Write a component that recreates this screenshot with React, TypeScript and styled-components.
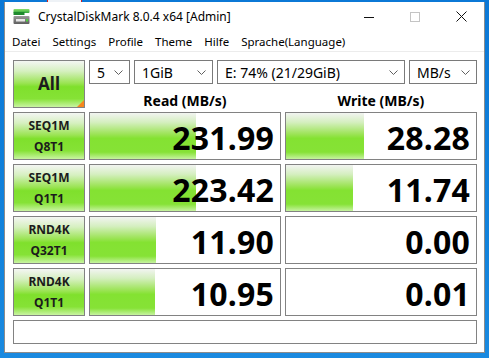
import { Fragment } from 'react';
import styled, { createGlobalStyle } from 'styled-components';

const GlobalStyle = createGlobalStyle`
  html, body {
    margin: 0;
    padding: 0;
  }
  body {
    width: 489px;
    height: 358px;
    overflow: hidden;
    background: linear-gradient(180deg, #0b78d6 0%, #1283dc 70%, #1a8ae0 100%);
    font-family: 'Segoe UI', 'Noto Sans', 'Open Sans', sans-serif;
  }
`;

const Desktop = styled.div`
  display: flex;
  flex-direction: column;
`;

const TopStrip = styled.div`
  height: 2px;
  display: flex;
  padding-left: 47px;
`;

const TaskMarker = styled.div`
  width: 33px;
  height: 2px;
  background: #eef2f6;
  border-left: 1px solid #d42020;
  border-right: 1px solid #d42020;
`;

const Window = styled.div`
  box-sizing: border-box;
  margin-left: 4px;
  width: 481px;
  height: 351px;
  background: #fff;
  border: 1px solid #8c8c8c;
  border-top: none;
  display: flex;
  flex-direction: column;
`;

const TitleBar = styled.div`
  height: 29px;
  display: flex;
  align-items: center;
  padding-left: 8px;
`;

const TitleText = styled.span`
  margin-left: 8px;
  font-size: 12px;
  color: #000;
  flex: 1;
  white-space: nowrap;
`;

const Controls = styled.div`
  display: flex;
  height: 29px;
`;

const ControlButton = styled.div`
  width: 46px;
  display: flex;
  align-items: center;
  justify-content: center;
`;

const MenuBar = styled.div`
  height: 20px;
  display: flex;
  align-items: center;
  gap: 12px;
  padding-left: 7px;
  border-bottom: 1px solid #ececec;
  font-size: 11.5px;
  color: #000;
`;

const MenuItem = styled.span`
  white-space: nowrap;
`;

const Content = styled.div`
  padding: 8px 8px 0 8px;
  display: grid;
  grid-template-columns: 72px 192px 192px;
  grid-template-rows: 24px 24px 52px 52px 52px 52px 28px;
  column-gap: 4px;
`;

const greenFace = `linear-gradient(180deg,
  #f4f6f3 0%,
  #d6f0c0 22%,
  #9be454 48%,
  #7fe02c 56%,
  #86e236 82%,
  #c9f4a2 100%)`;

const LabelButton = styled.div<{ $row: number; $span?: number; $big?: boolean }>`
  box-sizing: border-box;
  grid-column: 1;
  grid-row: ${p => p.$row} / span ${p => p.$span ?? 1};
  margin-top: ${p => (p.$row > 2 ? '4px' : '0')};
  position: relative;
  border: 1px solid #828282;
  background: ${greenFace};
  display: flex;
  flex-direction: column;
  align-items: center;
  justify-content: center;
  font-weight: 700;
  font-size: ${p => (p.$big ? '17px' : '12px')};
  line-height: ${p => (p.$big ? '20px' : '21px')};
  color: #1c1c1c;
`;

const Corner = styled.div`
  position: absolute;
  right: 0;
  bottom: 0;
  width: 0;
  height: 0;
  border-left: 7px solid transparent;
  border-bottom: 7px solid #f7861c;
`;

const SelectRow = styled.div`
  grid-column: 2 / span 2;
  grid-row: 1;
  display: flex;
  justify-content: space-between;
`;

const Select = styled.div<{ $w: number }>`
  box-sizing: border-box;
  width: ${p => p.$w}px;
  height: 24px;
  border: 1px solid #7a7a7a;
  background: #fff;
  display: flex;
  align-items: center;
  justify-content: space-between;
  padding: 0 6px 0 7px;
  font-size: 14px;
  color: #000;
  white-space: nowrap;
`;

const Header = styled.div<{ $col: number }>`
  grid-column: ${p => p.$col};
  grid-row: 2;
  display: flex;
  align-items: flex-end;
  justify-content: center;
  font-weight: 700;
  font-size: 14px;
  line-height: 18px;
  margin-bottom: -2px;
  color: #000;
`;

const ValueCell = styled.div<{ $row: number; $col: number }>`
  box-sizing: border-box;
  grid-column: ${p => p.$col};
  grid-row: ${p => p.$row};
  margin-top: 4px;
  position: relative;
  border: 1px solid #828282;
  background: #fff;
  display: flex;
  align-items: center;
  justify-content: flex-end;
  padding: 3px 6px 0 0;
  overflow: hidden;
`;

const Fill = styled.div`
  position: absolute;
  left: 0;
  top: 0;
  bottom: 0;
  background: linear-gradient(180deg,
    #f2f4f1 0%,
    #d5efc0 20%,
    #9ee45a 45%,
    #84e232 55%,
    #86e236 85%,
    #c6f3a0 100%);
`;

const Value = styled.span`
  position: relative;
  font-weight: 700;
  font-size: 32px;
  line-height: 1;
  color: #000;
  letter-spacing: 0.2px;
`;

const StatusBar = styled.div`
  box-sizing: border-box;
  grid-column: 1 / span 3;
  grid-row: 7;
  margin-top: 4px;
  height: 24px;
  border: 1px solid #828282;
  background: #fff;
`;

const AppIcon = () => (
  <svg width="17" height="17" viewBox="0 0 17 17">
    <defs>
      <linearGradient id="ig" x1="0" y1="0" x2="0" y2="1">
        <stop offset="0" stopColor="#8be06a" />
        <stop offset="1" stopColor="#2fa53a" />
      </linearGradient>
      <linearGradient id="ib" x1="0" y1="0" x2="0" y2="1">
        <stop offset="0" stopColor="#9a9a9a" />
        <stop offset="1" stopColor="#5e5e5e" />
      </linearGradient>
    </defs>
    <rect x="0.5" y="1" width="16" height="4" rx="1" fill="url(#ig)" />
    <rect x="0.5" y="4" width="11" height="3" fill="#1f8a2e" />
    <rect x="0.5" y="8" width="16" height="8" rx="1" fill="url(#ib)" />
    <rect x="3" y="11" width="9" height="2.5" fill="#e6e6e6" />
    <rect x="13" y="11" width="2" height="2.5" fill="#4ccf3a" />
  </svg>
);

const Chevron = () => (
  <svg width="9" height="5" viewBox="0 0 9 5">
    <path d="M0.5 0.5 L4.5 4.5 L8.5 0.5" fill="none" stroke="#606060" strokeWidth="1" />
  </svg>
);

const rows = [
  { top: 'SEQ1M', bottom: 'Q8T1', read: '231.99', readPct: 56, write: '28.28', writePct: 41 },
  { top: 'SEQ1M', bottom: 'Q1T1', read: '223.42', readPct: 56, write: '11.74', writePct: 35 },
  { top: 'RND4K', bottom: 'Q32T1', read: '11.90', readPct: 34.5, write: '0.00', writePct: 0 },
  { top: 'RND4K', bottom: 'Q1T1', read: '10.95', readPct: 34, write: '0.01', writePct: 0 },
];

const menu = ['Datei', 'Settings', 'Profile', 'Theme', 'Hilfe', 'Sprache(Language)'];

const selects = [
  { w: 41, label: '5' },
  { w: 79, label: '1GiB' },
  { w: 188, label: 'E: 74% (21/29GiB)' },
  { w: 68, label: 'MB/s' },
];

const App: React.FC = () => {
  return (
    <Desktop>
      <GlobalStyle />
      <TopStrip>
        <TaskMarker />
      </TopStrip>
      <Window>
        <TitleBar>
          <AppIcon />
          <TitleText>CrystalDiskMark 8.0.4 x64 [Admin]</TitleText>
          <Controls>
            <ControlButton>
              <svg width="10" height="10" viewBox="0 0 10 10">
                <path d="M0 5.5 H10" stroke="#111" strokeWidth="1" />
              </svg>
            </ControlButton>
            <ControlButton>
              <svg width="10" height="10" viewBox="0 0 10 10">
                <rect x="0.5" y="0.5" width="9" height="9" fill="none" stroke="#c4c4c4" strokeWidth="1" />
              </svg>
            </ControlButton>
            <ControlButton>
              <svg width="11" height="11" viewBox="0 0 11 11">
                <path d="M0.5 0.5 L10.5 10.5 M10.5 0.5 L0.5 10.5" stroke="#111" strokeWidth="1" />
              </svg>
            </ControlButton>
          </Controls>
        </TitleBar>
        <MenuBar>
          {menu.map(m => (
            <MenuItem key={m}>{m}</MenuItem>
          ))}
        </MenuBar>
        <Content>
          <LabelButton $row={1} $span={2} $big>
            All
            <Corner />
          </LabelButton>
          <SelectRow>
            {selects.map(s => (
              <Select key={s.label} $w={s.w}>
                <span>{s.label}</span>
                <Chevron />
              </Select>
            ))}
          </SelectRow>
          <Header $col={2}>Read (MB/s)</Header>
          <Header $col={3}>Write (MB/s)</Header>
          {rows.map((r, i) => (
            <Fragment key={i}>
              <LabelButton $row={i + 3}>
                <span>{r.top}</span>
                <span>{r.bottom}</span>
              </LabelButton>
              <ValueCell $row={i + 3} $col={2}>
                {r.readPct > 0 && <Fill style={{ width: `${r.readPct}%` }} />}
                <Value>{r.read}</Value>
              </ValueCell>
              <ValueCell $row={i + 3} $col={3}>
                {r.writePct > 0 && <Fill style={{ width: `${r.writePct}%` }} />}
                <Value>{r.write}</Value>
              </ValueCell>
            </Fragment>
          ))}
          <StatusBar />
        </Content>
      </Window>
    </Desktop>
  );
};

export default App;
